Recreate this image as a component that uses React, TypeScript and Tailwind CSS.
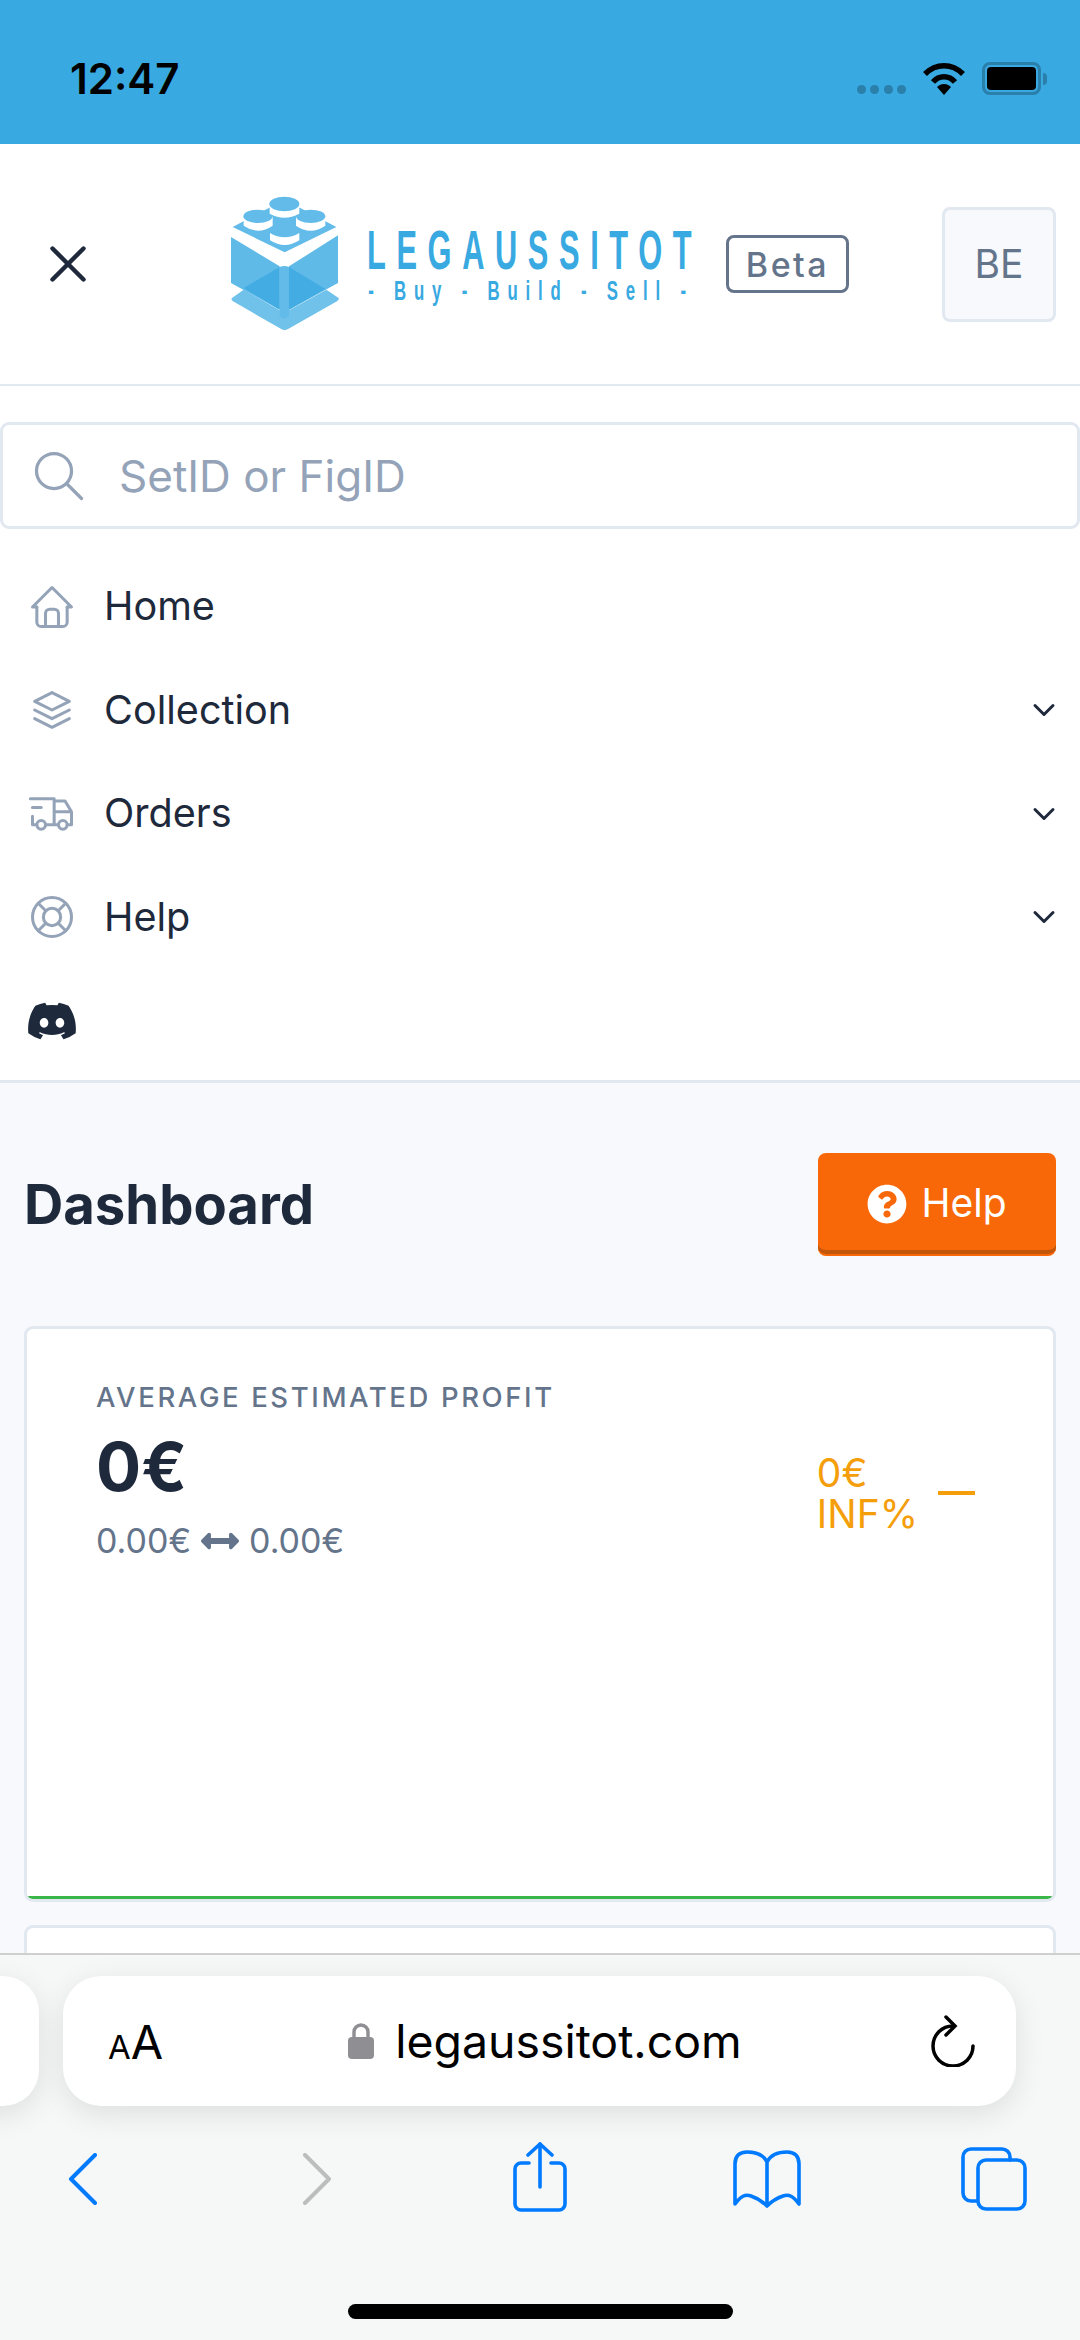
import { FaDiscord, FaQuestionCircle, FaArrowsAltH } from "react-icons/fa";
import { TbHome, TbStack2, TbTruckDelivery, TbLifebuoy, TbSearch, TbChevronDown, TbX } from "react-icons/tb";

function LogoMark() {
  return (
    <svg viewBox="80 70 345 420" className="w-[115px] h-[140px] shrink-0">
      <path d="M95 385 L130 360 L238 422 H266 L378 360 L415 385 Q417 391 410 395 L262 479 Q253 484 244 479 L98 395 Q91 391 95 385 Z" fill="#70c2ea" />
      <path d="M92 202 L238 290 V420 L92 340 Z" fill="#60bae8" />
      <path d="M413 197 L266 290 V420 L413 340 Z" fill="#60bae8" />
      <path d="M238 292 L130 355 L238 420 Z" fill="#42ace3" />
      <path d="M266 292 L375 358 L266 420 Z" fill="#42ace3" />
      <path d="M238 292 Q252 286 266 292 V440 L252 448 L238 440 Z" fill="#62bbe8" />
      <path d="M97 172 L253 90 L408 172 L253 248 Z" fill="#62bbe8" />
      <path d="M130 140 V168 Q173 198 217 168 V140 Z" fill="#fff" />
      <ellipse cx="173" cy="140" rx="44" ry="20" fill="#62bbe8" />
      <path d="M287 140 V168 Q331 198 375 168 V140 Z" fill="#fff" />
      <ellipse cx="331" cy="140" rx="44" ry="20" fill="#62bbe8" />
      <path d="M208 103 V132 Q252 156 297 132 V103 Z" fill="#fff" />
      <ellipse cx="252" cy="103" rx="45" ry="22" fill="#62bbe8" />
      <path d="M209 190 V212 Q253 240 297 212 V190 Q253 216 209 190 Z" fill="#fff" />
    </svg>
  );
}

function StatusBar() {
  return (
    <div className="h-[144px] bg-[#38a9e1] flex items-start pt-[60px] pl-[70px] pr-[33px] justify-between shrink-0">
      <span className="text-[42px] leading-[38px] font-semibold text-black">12:47</span>
      <div className="flex items-start pt-[2px]">
        <div className="flex gap-[4.5px] mt-[23px] mr-[16px]">
          <span className="w-[9px] h-[9px] rounded-full bg-[#2a7fab]" />
          <span className="w-[9px] h-[9px] rounded-full bg-[#2a7fab]" />
          <span className="w-[9px] h-[9px] rounded-full bg-[#2a7fab]" />
          <span className="w-[9px] h-[9px] rounded-full bg-[#2a7fab]" />
        </div>
        <svg viewBox="0 0 44 33" className="w-[44px] h-[33px] mr-[16px]">
          <path d="M3 12 C14 1 30 1 41 12" fill="none" stroke="#000" strokeWidth="5.5" />
          <path d="M11 20 C17 13 27 13 33 20" fill="none" stroke="#000" strokeWidth="5.5" />
          <path d="M15 25 C19 21 25 21 29 25 L22 33 Z" fill="#000" />
        </svg>
        <div className="w-[59px] h-[33px] rounded-[8px] border-[3px] border-[#2a7fab] p-[2px]">
          <div className="w-full h-full rounded-[4px] bg-black" />
        </div>
        <div className="w-[4px] h-[12px] rounded-r-full bg-[#2a7fab] mt-[11px] ml-[2px]" />
      </div>
    </div>
  );
}

function Header() {
  return (
    <header className="h-[242px] bg-white border-b-2 border-[#e2e8f0] flex items-center pl-[37px] pr-[24px] shrink-0">
      <TbX className="w-[62px] h-[62px] text-[#1e293b] shrink-0" strokeWidth={1.7} />
      <div className="ml-[128px] flex items-center w-[115px] -mt-[3px]">
        <LogoMark />
      </div>
      <div className="ml-[25px] w-[326px] mt-[2px] font-['Liberation_Sans',sans-serif] text-[#38a9e1] overflow-visible">
        <div className="origin-left scale-x-[0.55] text-[56px] leading-[52px] font-bold tracking-[19.3px] whitespace-nowrap">LEGAUSSITOT</div>
        <div className="origin-left scale-x-[0.6] text-[28px] leading-[30px] font-bold tracking-[13px] whitespace-nowrap pl-[2px]">- Buy - Build - Sell -</div>
      </div>
      <div className="ml-[33px] w-[123px] h-[58px] rounded-[8px] border-[3px] border-[#64748b] flex items-center justify-center text-[34px] font-medium tracking-[2.5px] text-[#64748b] shrink-0">Beta</div>
      <div className="ml-auto w-[114px] h-[115px] rounded-[8px] border-[3px] border-[#e2e8f0] bg-[#f7f9fc] flex items-center justify-center text-[39px] text-[#64748b] shrink-0">BE</div>
    </header>
  );
}

function NavRow({ icon, label, chevron }: { icon: React.ReactNode; label: string; chevron?: boolean }) {
  return (
    <div className="h-[103.5px] flex items-center pl-[26px] pr-[18px]">
      <span className="w-[52px] flex justify-center text-[#94a3b8]">{icon}</span>
      <span className="ml-[26px] text-[39.6px] text-[#1e293b]">{label}</span>
      {chevron && <TbChevronDown className="ml-auto w-[36px] h-[36px] text-[#1e293b]" strokeWidth={2} />}
    </div>
  );
}

function SearchNav() {
  return (
    <div className="h-[697px] bg-white border-b-[3px] border-[#e2e8f0] shrink-0 pt-[36px]">
      <div className="h-[107px] rounded-[9px] border-[3px] border-[#e2e8f0] flex items-center pl-[26px]">
        <TbSearch className="w-[60px] h-[60px] text-[#94a3b8]" strokeWidth={1.3} />
        <span className="ml-[30px] text-[44px] text-[#94a3b8]">SetID or FigID</span>
      </div>
      <nav className="mt-[26px]">
        <NavRow icon={<TbHome className="w-[58px] h-[58px]" strokeWidth={1.4} />} label="Home" />
        <NavRow icon={<TbStack2 className="w-[56px] h-[56px]" strokeWidth={1.4} />} label="Collection" chevron />
        <NavRow icon={<TbTruckDelivery className="w-[60px] h-[60px]" strokeWidth={1.4} />} label="Orders" chevron />
        <NavRow icon={<TbLifebuoy className="w-[58px] h-[58px]" strokeWidth={1.4} />} label="Help" chevron />
      </nav>
      <div className="pl-[26px] mt-[26px]">
        <FaDiscord className="w-[52px] h-[52px] text-[#1e293b]" />
      </div>
    </div>
  );
}

function Dashboard() {
  return (
    <main className="flex-1 bg-[#f7f9fc] px-[24px] pt-[70px]">
      <div className="flex items-center justify-between h-[103px]">
        <h1 className="text-[54.4px] font-bold text-[#1e293b]">Dashboard</h1>
        <button className="w-[238px] h-[103px] rounded-[8px] bg-[#f96808] shadow-[inset_0_-4px_0_0_#c2570c] border-b-[2px] border-[#f96808] flex items-center justify-center gap-[14px] text-[39px] text-white">
          <FaQuestionCircle className="w-[40px] h-[40px]" />
          Help
        </button>
      </div>
      <section className="mt-[70px] h-[576px] rounded-[9px] bg-white border-[3px] border-[#e2e8f0] overflow-hidden">
        <div className="h-[570px] border-b-[3px] border-[#39b54a] pl-[69px] pr-[78px] pt-[51px] flex justify-between">
          <div>
            <div className="text-[27.5px] leading-[34px] font-medium tracking-[2.6px] text-[#64748b]">AVERAGE ESTIMATED PROFIT</div>
            <div className="text-[67px] leading-[80px] font-bold text-[#1e293b] mt-[13px]">0€</div>
            <div className="flex items-center text-[34px] leading-[44px] text-[#64748b] mt-[12px]">
              0.00€
              <FaArrowsAltH className="w-[38px] h-[38px] mx-[10px]" />
              0.00€
            </div>
          </div>
          <div className="flex items-center h-[84px] mt-[71px] text-[#f59e0b]">
            <div className="text-[39px] leading-[41px]">
              <div>0€</div>
              <div>INF%</div>
            </div>
            <span className="ml-[20px] w-[37px] h-[4px] bg-[#f59e0b]" />
          </div>
        </div>
      </section>
      <section className="mt-[23px] h-[200px] rounded-[9px] bg-white border-[3px] border-[#e2e8f0]" />
    </main>
  );
}

function SafariBar() {
  return (
    <div className="absolute left-0 right-0 bottom-0 h-[387px] bg-[#f5f8f6] border-t-2 border-[#cfcfcf] overflow-hidden">
      <div className="absolute left-[-80px] top-[21px] w-[119px] h-[130px] rounded-[36px] bg-white shadow-[0_8px_30px_rgba(0,0,0,0.1)]" />
      <div className="absolute left-[63px] top-[21px] w-[953px] h-[130px] rounded-[38px] bg-white shadow-[0_8px_30px_rgba(0,0,0,0.1)] flex items-center pl-[45px] pr-[40px] text-black">
        <span className="flex items-baseline leading-none">
          <span className="text-[33px]">A</span>
          <span className="text-[47px]">A</span>
        </span>
        <svg viewBox="0 0 26 36" className="ml-[185px] w-[26px] h-[36px]">
          <path d="M6 16 V9 a7 7 0 0 1 14 0 V16" fill="none" stroke="#8e8e93" strokeWidth="3.4" />
          <rect x="0" y="14" width="26" height="22" rx="4" fill="#8e8e93" />
        </svg>
        <span className="ml-[21px] text-[46.4px] leading-none">legaussitot.com</span>
        <svg viewBox="0 0 46 52" className="ml-auto w-[46px] h-[52px]" fill="none" stroke="#000" strokeWidth="3.5" strokeLinecap="round">
          <path d="M23 11 A20 20 0 1 0 43 31" />
          <path d="M16 2 L25 11 L16 20" />
        </svg>
      </div>
      <div className="absolute left-0 top-[187px] flex items-start pl-[68px]">
        <svg viewBox="0 0 29 52" className="w-[29px] h-[52px] mt-[11px] mr-[205px]" fill="none" stroke="#007aff" strokeWidth="4" strokeLinecap="round" strokeLinejoin="round">
          <path d="M27 2 L3 26 L27 50" />
        </svg>
        <svg viewBox="0 0 30 52" className="w-[30px] h-[52px] mt-[11px] mr-[181px]" fill="none" stroke="#bdbdbd" strokeWidth="4" strokeLinecap="round" strokeLinejoin="round">
          <path d="M3 2 L27 26 L3 50" />
        </svg>
        <svg viewBox="0 0 54 70" className="w-[54px] h-[70px] mr-[166px]" fill="none" stroke="#007aff" strokeWidth="3.6" strokeLinecap="round" strokeLinejoin="round">
          <path d="M16 21 H8 a6 6 0 0 0 -6 6 V62 a6 6 0 0 0 6 6 H46 a6 6 0 0 0 6 -6 V27 a6 6 0 0 0 -6 -6 H38" />
          <path d="M27 2 V45" />
          <path d="M15 13 L27 2 L39 13" />
        </svg>
        <svg viewBox="0 0 68 58" className="w-[68px] h-[58px] mt-[8px] mr-[160px]" fill="none" stroke="#007aff" strokeWidth="3.6" strokeLinejoin="round">
          <path d="M34 12 C30 4 22 2 14 2 C6 2 2 6 2 14 V54 C8 46 12 44 18 46 C24 48 30 52 34 56 C38 52 44 48 50 46 C56 44 60 46 66 54 V14 C66 6 62 2 54 2 C46 2 38 4 34 12 V56" />
        </svg>
        <svg viewBox="0 0 66 64" className="w-[66px] h-[64px] mt-[5px]" fill="none" stroke="#007aff" strokeWidth="3.6" strokeLinecap="round">
          <path d="M16 54 H10 a8 8 0 0 1 -8 -8 V10 a8 8 0 0 1 8 -8 H41 a8 8 0 0 1 8 8 V13" />
          <rect x="17" y="13" width="47" height="49" rx="8" />
        </svg>
      </div>
      <div className="absolute left-[348px] top-[349px] w-[385px] h-[15px] rounded-full bg-black" />
    </div>
  );
}

export default function App() {
  return (
    <div className="relative w-[1080px] h-[2340px] overflow-hidden flex flex-col bg-[#f7f9fc] font-['Inter',sans-serif]">
      <StatusBar />
      <Header />
      <SearchNav />
      <Dashboard />
      <SafariBar />
    </div>
  );
}
